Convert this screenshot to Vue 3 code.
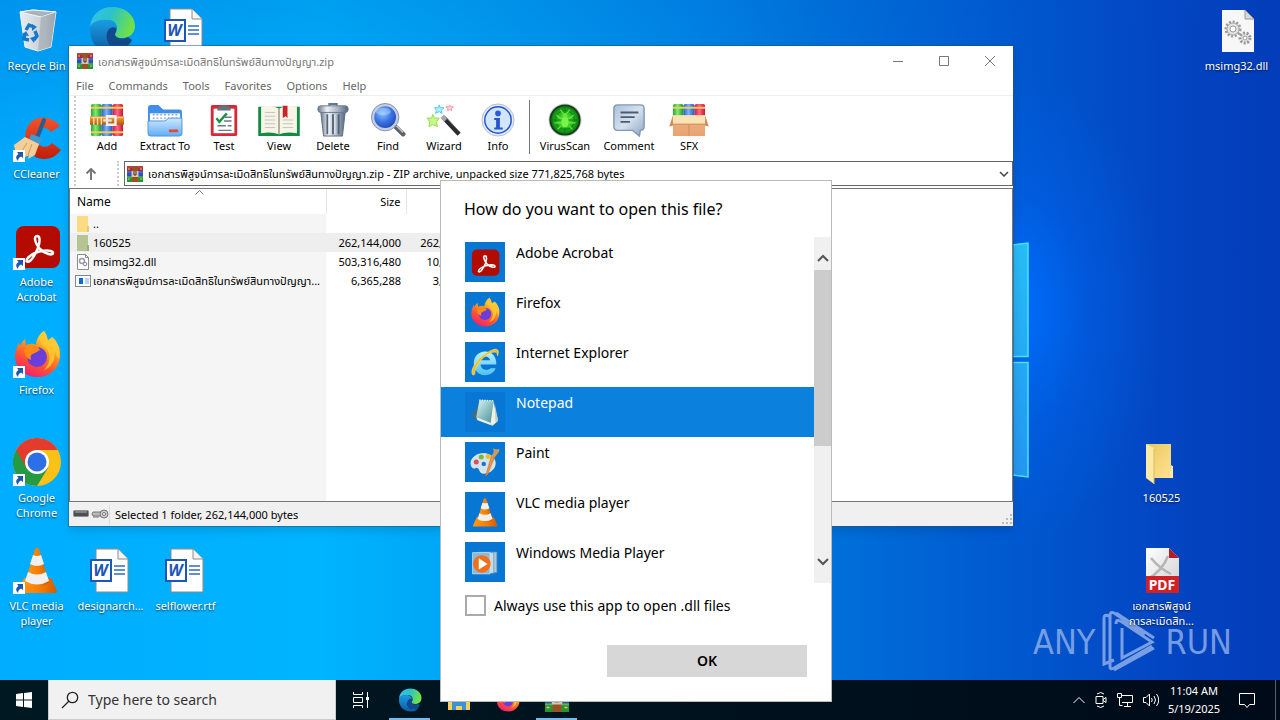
<script setup>
import { ref } from 'vue'

const archiveName = 'เอกสารพิสูจน์การละเมิดสิทธิในทรัพย์สินทางปัญญา'

const menus = ['File', 'Commands', 'Tools', 'Favorites', 'Options', 'Help']

const tools = [
  { label: 'Add', icon: 'i-add' },
  { label: 'Extract To', icon: 'i-extract' },
  { label: 'Test', icon: 'i-test' },
  { label: 'View', icon: 'i-view' },
  { label: 'Delete', icon: 'i-delete' },
  { label: 'Find', icon: 'i-find' },
  { label: 'Wizard', icon: 'i-wizard' },
  { label: 'Info', icon: 'i-info' },
  { sep: true },
  { label: 'VirusScan', icon: 'i-virus' },
  { label: 'Comment', icon: 'i-comment' },
  { label: 'SFX', icon: 'i-sfx' },
]

const files = [
  { name: '..', size: '', packed: '', icon: 'i-folder-s' },
  { name: '160525', size: '262,144,000', packed: '262,', icon: 'i-folder-g', selected: true },
  { name: 'msimg32.dll', size: '503,316,480', packed: '10,', icon: 'i-dll-s' },
  { name: archiveName + '...', size: '6,365,288', packed: '3,', icon: 'i-exe-s' },
]

const shortcuts = [
  { label: 'Recycle Bin', icon: 'i-bin', x: 0, y: 6 },
  { label: '', icon: 'i-edge', x: 75, y: 6 },
  { label: '', icon: 'i-word', x: 148, y: 6, badge: 'W' },
  { label: 'CCleaner', icon: 'i-ccleaner', x: 0, y: 114, link: true },
  { label: 'Adobe Acrobat', icon: 'i-acrobat', x: 0, y: 222, link: true },
  { label: 'Firefox', icon: 'i-firefox', x: 0, y: 330, link: true },
  { label: 'Google Chrome', icon: 'i-chrome', x: 0, y: 438, link: true },
  { label: 'VLC media player', icon: 'i-vlc', x: 0, y: 546, link: true },
  { label: 'designarch...', icon: 'i-word', x: 74, y: 546, badge: 'W' },
  { label: 'selflower.rtf', icon: 'i-word', x: 149, y: 546, badge: 'W' },
  { label: 'msimg32.dll', icon: 'i-dll', x: 1200, y: 6 },
  { label: '160525', icon: 'i-folder', x: 1125, y: 438 },
  { label: 'เอกสารพิสูจน์ การละเมิดสิท...', icon: 'i-pdf', x: 1125, y: 546, badge: 'PDF' },
]

const apps = [
  { name: 'Adobe Acrobat', icon: 'i-acrobat' },
  { name: 'Firefox', icon: 'i-firefox' },
  { name: 'Internet Explorer', icon: 'i-ie' },
  { name: 'Notepad', icon: 'i-notepad' },
  { name: 'Paint', icon: 'i-paint' },
  { name: 'VLC media player', icon: 'i-vlc' },
  { name: 'Windows Media Player', icon: 'i-wmp' },
]
const chosen = ref('Notepad')
const always = ref(false)
</script>

<template>
  <div class="desktop">
    <svg class="defs" width="0" height="0" aria-hidden="true">
      <defs>
        <linearGradient id="g-edge1" x1="0" y1="0" x2="1" y2="0.3"><stop offset="0" stop-color="#35c1f1" /><stop offset="0.5" stop-color="#2bc3c8" /><stop offset="1" stop-color="#6fe04a" /></linearGradient>
        <linearGradient id="g-edge2" x1="0" y1="0" x2="0" y2="1"><stop offset="0" stop-color="#1b9de2" /><stop offset="1" stop-color="#0c59a4" /></linearGradient>
        <linearGradient id="g-ff" x1="0.8" y1="0" x2="0.3" y2="1"><stop offset="0" stop-color="#fff04a" /><stop offset="0.35" stop-color="#ffa51e" /><stop offset="0.7" stop-color="#ff5035" /><stop offset="1" stop-color="#ee1f76" /></linearGradient>
        <linearGradient id="g-bin" x1="0" y1="0" x2="1" y2="0"><stop offset="0" stop-color="#e8edf0" /><stop offset="0.7" stop-color="#c4ccd3" /><stop offset="1" stop-color="#9ba6b0" /></linearGradient>
        <linearGradient id="g-cone" x1="0" y1="0" x2="1" y2="0"><stop offset="0" stop-color="#ff9a1c" /><stop offset="0.6" stop-color="#f47b00" /><stop offset="1" stop-color="#cf5b00" /></linearGradient>
        <linearGradient id="g-cc" x1="0" y1="0" x2="0" y2="1"><stop offset="0" stop-color="#f2522c" /><stop offset="1" stop-color="#c11d0b" /></linearGradient>
        <linearGradient id="g-fold" x1="0" y1="0" x2="1" y2="1"><stop offset="0" stop-color="#e9c85f" /><stop offset="1" stop-color="#ffe394" /></linearGradient>
        <linearGradient id="g-green" x1="0" y1="0" x2="1" y2="0"><stop offset="0" stop-color="#2aa33a" /><stop offset="0.45" stop-color="#7cec72" /><stop offset="1" stop-color="#1b9330" /></linearGradient>
        <linearGradient id="g-blue" x1="0" y1="0" x2="1" y2="0"><stop offset="0" stop-color="#2a5ec8" /><stop offset="0.45" stop-color="#7ab2fa" /><stop offset="1" stop-color="#2455b8" /></linearGradient>
        <linearGradient id="g-red" x1="0" y1="0" x2="1" y2="0"><stop offset="0" stop-color="#d01c42" /><stop offset="0.45" stop-color="#ff6684" /><stop offset="1" stop-color="#c0183c" /></linearGradient>
        <linearGradient id="g-belt" x1="0" y1="0" x2="0" y2="1"><stop offset="0" stop-color="#f6a443" /><stop offset="1" stop-color="#b3580c" /></linearGradient>
        <linearGradient id="g-xfold" x1="0" y1="0" x2="0" y2="1"><stop offset="0" stop-color="#cfe8ff" /><stop offset="1" stop-color="#62adf5" /></linearGradient>
        <linearGradient id="g-metal" x1="0" y1="0" x2="1" y2="0"><stop offset="0" stop-color="#69778a" /><stop offset="0.3" stop-color="#eef2f6" /><stop offset="0.65" stop-color="#a9b6c5" /><stop offset="1" stop-color="#56647a" /></linearGradient>
        <radialGradient id="g-lens" cx="0.4" cy="0.35" r="0.7"><stop offset="0" stop-color="#8cc2ff" /><stop offset="0.5" stop-color="#3a74e4" /><stop offset="1" stop-color="#1b3fae" /></radialGradient>
        <radialGradient id="g-virus"><stop offset="0" stop-color="#71ef3c" /><stop offset="0.6" stop-color="#24b41c" /><stop offset="1" stop-color="#0a7312" /></radialGradient>
        <linearGradient id="g-bubble" x1="0" y1="0" x2="1" y2="1"><stop offset="0" stop-color="#a9c0dc" /><stop offset="0.5" stop-color="#d5e1ee" /><stop offset="1" stop-color="#8ba5c4" /></linearGradient>
        <linearGradient id="g-box" x1="0" y1="0" x2="0" y2="1"><stop offset="0" stop-color="#f0b27f" /><stop offset="1" stop-color="#e8a373" /></linearGradient>
        <linearGradient id="g-ie" x1="0" y1="0" x2="0" y2="1"><stop offset="0" stop-color="#b8f0ff" /><stop offset="1" stop-color="#4fc2f5" /></linearGradient>
        <linearGradient id="g-note" x1="0" y1="0" x2="1" y2="1"><stop offset="0" stop-color="#e3f3f1" /><stop offset="0.5" stop-color="#8fc3c5" /><stop offset="1" stop-color="#4c8f9b" /></linearGradient>
        <linearGradient id="g-page" x1="0" y1="0" x2="1" y2="1"><stop offset="0" stop-color="#ffffff" /><stop offset="1" stop-color="#cfcfcf" /></linearGradient>
        <linearGradient id="g-pane" x1="0" y1="0" x2="0" y2="1"><stop offset="0" stop-color="#27bdf6" /><stop offset="1" stop-color="#2496f3" /></linearGradient>
      </defs>

      <symbol id="i-bin" viewBox="0 0 48 48">
        <path d="M7 6 20 4 43 6 38 41 25 45 12 41Z" fill="url(#g-bin)" stroke="#eef6fa" />
        <path d="M7 6 20 4 43 6 28 11Z" fill="#a9b3ba" stroke="#f5f8fa" />
        <path d="M28 11 43 6 38 41 25 45Z" fill="#9aa4ac" opacity=".55" />
        <g fill="none" stroke="#1778c9" stroke-width="3.4"><path d="m13 24 3-5 5 2m1 4 2 5-3 4m-5 0-5-1 1-6" /></g>
        <path d="m19 18 5 3-5 4ZM23 30l-6 2 4 5ZM9 29l4-4 3 5Z" fill="#1778c9" />
      </symbol>
      <symbol id="i-edge" viewBox="0 0 48 48">
        <path d="M2 21C3 8 13 1 24 1c15 0 23 10 23 19 0 8-6 12-13 12-5 0-8-2-7-4 5-6 1-14-7-14C11 14 4 17 2 21Z" fill="url(#g-edge1)" />
        <path d="M2 21c2-5 9-8 17-7 6 1 10 5 9 11-3-2-10 1-9 9 1 6 7 9 13 8 5 0 9-2 11-4-4 6-11 10-19 9C9 46 1 35 2 21Z" fill="url(#g-edge2)" />
        <path d="M19 34c-2-8 3-15 9-12 1 3-1 5-1 7 1 3 7 5 13 2l4 3c-1 3-5 8-12 8-6 1-12-2-13-8Z" fill="#114a8b" />
      </symbol>
      <symbol id="i-word" viewBox="0 0 48 48">
        <path d="M9 3H31L41 13V46H9Z" fill="#fff" stroke="#8a8a8a" />
        <path d="M31 3V13H41" fill="#f4f4f4" stroke="#8a8a8a" />
        <path d="M27 20h11M27 24h11M27 28h11" stroke="#2b6cc4" stroke-width="1.3" />
        <rect x="4" y="14" width="20" height="21" fill="#fff" stroke="#1c57b8" stroke-width="2" />
      </symbol>
      <symbol id="i-ccleaner" viewBox="0 0 48 48">
        <path d="M47 12C38 1 20 0 14 14c-6 15 3 31 17 31 8 0 13-4 17-9l-9-7c-6 7-15 4-15-6 0-9 8-13 14-5Z" fill="url(#g-cc)" />
        <path d="M31 6 24 24" stroke="#235f92" stroke-width="4" stroke-linecap="round" />
        <path d="m18 20 11 4-3 8-11-3Z" fill="#4598cf" />
        <path d="m12 23 14 7-4 11-7 4 1-4-6 3 1-4-8 1-2-10Z" fill="#f3cf96" /><path d="m14 29-5 8m10-7-4 11" stroke="#c99b5c" />
      </symbol>
      <symbol id="i-acrobat" viewBox="0 0 48 48">
        <rect x="3" y="4" width="44" height="42" rx="8" fill="#b30b00" />
        <path d="M24 14c-3 0-3 6 3 13 5 5 13 7 13 4 0-4-16-3-23 3-6 5-3 8 1 4 6-7 10-18 8-23q-1-1-2-1Z" fill="none" stroke="#fff" stroke-width="2.5" />
      </symbol>
      <symbol id="i-firefox" viewBox="0 0 48 48">
        <path d="M31 1c3 4 3 7 4 9 4 1 4-3 4-3 6 5 9 12 8 20-1 12-11 20-22 20C12 47 2 39 2 26c0-6 3-10 4-14l1 4c1-3 3-5 5-7l1 6c4-1 7-2 10 0 0-5 3-11 8-14Z" fill="url(#g-ff)" />
        <circle cx="24" cy="27" r="10" fill="#6b3ddb" />
        <path d="M14 16c5-3 11 0 13 4l-5 3c-4 1-5 3-4 7-6-2-9-8-4-14Z" fill="#ff8a16" />
        <path d="M31 1c3 4 3 7 4 9l4-3c6 5 9 14 7 22-2-2-3-4-4-8 0 10-4 17-11 19 6-6 8-16 2-22-7-5-8-11-2-17Z" fill="#ffc832" opacity=".85" />
      </symbol>
      <symbol id="i-chrome" viewBox="0 0 48 48">
        <circle cx="24" cy="24" r="24" fill="#fbc116" />
        <path d="M24 24 3.2 12A24 24 0 0 1 44.8 12Z" fill="#e33b2e" />
        <path d="M24 24 3.2 12A24 24 0 0 0 24 48L35 30Z" fill="#259a43" />
        <path d="M24 12H44.8L34 30Z" fill="#fbc116" /><path d="M3.2 12 13.6 30 24 12Z" fill="#e33b2e" />
        <circle cx="24" cy="24" r="12" fill="#fff" /><circle cx="24" cy="24" r="9.5" fill="#2d6fe6" />
      </symbol>
      <symbol id="i-vlc" viewBox="0 0 48 48">
        <path d="M11 32H38L44 45Q44 47 42 47H6Q4 47 5 45Z" fill="url(#g-cone)" />
        <path d="M22 3Q24 1 26 3L36 37Q24 45 12 37Z" fill="url(#g-cone)" />
        <path d="m20 9-3 9q7 4 14 0l-3-9q-4 2-8 0ZM15 26l-3 9q12 7 24 0l-3-9q-9 5-18 0Z" fill="#f0f0ee" />
      </symbol>
      <symbol id="i-dll" viewBox="0 0 48 48">
        <path d="M9 4H32L41 13V46H9Z" fill="#f7f7f7" /><path d="M32 4V13H41Z" fill="#d8d8d8" stroke="#999" />
        <circle cx="20" cy="23" r="7" fill="#e6e6e6" stroke="#9b9b9b" stroke-width="3" stroke-dasharray="2 1.6" />
        <circle cx="20" cy="23" r="6" fill="#e3e3e3" stroke="#aaa" /><circle cx="20" cy="23" r="3" fill="#fff" stroke="#999" />
        <circle cx="32" cy="32" r="5" fill="#e6e6e6" stroke="#999" stroke-width="3" stroke-dasharray="2 1.5" />
        <circle cx="32" cy="32" r="2" fill="#fff" stroke="#999" />
      </symbol>
      <symbol id="i-dll-s" viewBox="0 0 16 16">
        <path d="M2.500 .5h8l3 3v12h-11Z" fill="#fff" stroke="#8b8b8b" /><path d="M10.500 .5v3h3" fill="none" stroke="#8b8b8b" />
        <circle cx="7" cy="7" r="2.500" fill="none" stroke="#99a" stroke-width="1.500" /><circle cx="10" cy="10" r="1.800" fill="#eef" stroke="#889" />
      </symbol>
      <symbol id="i-exe-s" viewBox="0 0 16 16">
        <rect x=".5" y="2.500" width="15" height="11" fill="#fff" stroke="#7f8790" />
        <path d="M4 5h4v6H4Z" fill="#0a6dd6" /><path d="M10 6h4M10 8h4M10 10h4" stroke="#74a9e6" />
      </symbol>
      <symbol id="i-folder" viewBox="0 0 48 48">
        <path d="M8 6H33V28L35 28V40H16Z" fill="url(#g-fold)" />
        <path d="M33 27q2 1 2 3V40h-3Z" fill="#ffe9a6" />
        <path d="m8 6 8 4V46L8 40Z" fill="#ffeaa5" /><path d="M16 11V46" stroke="#e0bd55" />
      </symbol>
      <symbol id="i-folder-s" viewBox="0 0 16 16"><path d="M2 0h11v10h1v6H2Z" fill="#fbdc84" /><path d="M12 10h2v6h-2Z" fill="#e9c96c" /></symbol>
      <symbol id="i-folder-g" viewBox="0 0 16 16"><path d="M2 0h11v10h1v6H2Z" fill="#b5c493" /><path d="M12 10h2v6h-2Z" fill="#9cad78" /></symbol>
      <symbol id="i-pdf" viewBox="0 0 48 48">
        <path d="M8 2H31L41 12V47H8Z" fill="url(#g-page)" />
        <path d="M13 12q8 10 20 16M30 10q-5 14-21 24" fill="none" stroke="#b5b5b5" stroke-width="2.500" />
        <path d="M31 2V12H41Z" fill="#b81c22" /><rect x="8" y="30" width="33" height="17" fill="#d22027" />
      </symbol>
      <symbol id="i-link" viewBox="0 0 12 12">
        <path d="M0 0h12v12H0Z" fill="#fff" /><path d="M4 2h6v6L8 6.500Q5 8 5 11 1 7 5.500 4Z" fill="#1d58ab" />
      </symbol>

      <symbol id="i-rar" viewBox="0 0 16 16">
        <path d="M0 0h16v5H0Z" fill="#a92a3c" /><path d="M0 5h16v5H0Z" fill="#2c50bd" /><path d="M0 10h16v6H0Z" fill="#24943b" />
        <path d="M0 1h16M0 6h16M0 11h16" stroke="#fff" stroke-opacity=".25" />
        <path d="M5 0h6v16H5Z" fill="#9a5320" /><path d="M4.500 5h7v6h-7Z" fill="#d6c5b4" /><path d="M7 5v4h2V5" fill="none" stroke="#4d2d21" />
        <path d="M1 3h2M13 3h2M1 13h2M13 13h2" stroke="#eecb3e" />
      </symbol>
      <symbol id="i-add" viewBox="0 0 36 36">
        <rect x="1" y="1" width="11" height="34" rx="2" fill="url(#g-green)" /><rect x="12" y="1" width="12" height="34" rx="2" fill="url(#g-blue)" /><rect x="24" y="1" width="11" height="34" rx="2" fill="url(#g-red)" />
        <path d="M1 5h34M1 31h34" stroke="#f3cd43" stroke-width="2" />
        <path d="M0 14h36v9H0Z" fill="url(#g-belt)" /><path d="M1 15.500h34" stroke="#ffd492" />
        <path d="M4 15v8M8 15v8M12 15v8" stroke="#f7dfa5" stroke-width="1.500" />
        <path d="M18 14h9v9h-9Z" fill="none" stroke="#f1f1f1" stroke-width="2.500" /><path d="M14 18.500h9" stroke="#e4e4e4" stroke-width="2.500" />
      </symbol>
      <symbol id="i-extract" viewBox="0 0 36 36">
        <path d="M0 5Q0 2 3 2h8l5 5h17q3 0 3 3v22H0Z" fill="#3f8fea" /><path d="M2 11h32v10H2Z" fill="#fff" />
        <path d="M5 12.500h27M5 16h27" stroke="#89a8c9" stroke-dasharray="2 2" stroke-width="1.500" />
        <path d="M0 19h18l4-3h14v16q0 3-3 3H3q-3 0-3-3Z" fill="url(#g-xfold)" stroke="#4c94dc" /><rect x="22" y="28" width="10" height="3" rx="1" fill="#e44932" />
      </symbol>
      <symbol id="i-test" viewBox="0 0 36 36">
        <rect x="4" y="2" width="28" height="33" rx="2" fill="#d72837" /><path d="M7 6h22v26H7Z" fill="#fff" />
        <path d="M11 5q7-5 14 0v3H11Z" fill="#697078" /><path d="m10 16 3 4 8-9" fill="none" stroke="#169340" stroke-width="2.500" />
        <path d="M19 15h7M18 19h8M11 24h9m2 0h4m-14 5h14" stroke="#6c7b82" stroke-width="1.500" />
      </symbol>
      <symbol id="i-view" viewBox="0 0 44 36">
        <path d="M0 4h44v31H0Z" fill="#128b43" /><path d="M3 4q11-3 19 2 8-5 19-2v28q-11-2-19 1-8-3-19-1Z" fill="#f7f4e8" />
        <path d="M22 6v27" stroke="#b0aa98" stroke-width="2" /><path d="M7 10h11M7 14h11M7 18h11M7 22h11M7 26h11M26 18h11M26 22h11M26 26h11" stroke="#c3c1b8" />
        <path d="M26 3h5v13l-2-2-3 2Z" fill="#c4262c" />
      </symbol>
      <symbol id="i-delete" viewBox="0 0 36 36">
        <path d="M5 9h26l-3 26H8Z" fill="url(#g-metal)" stroke="#5c6c7f" /><path d="M12 12v21M18 12v21M24 12v21" stroke="#54657a" stroke-width="2" /><path d="M14 12v21M20 12v21" stroke="#f2f5f7" />
        <rect x="2" y="3" width="32" height="7" rx="3" fill="url(#g-metal)" stroke="#66768a" /><path d="M14 3V1h8v2" fill="none" stroke="#66768a" stroke-width="2" />
      </symbol>
      <symbol id="i-find" viewBox="0 0 36 36">
        <path d="m26 25 8 8" stroke="#5e636a" stroke-width="5" stroke-linecap="round" /><path d="m27 24 7 7" stroke="#b9bdc2" stroke-width="2" />
        <circle cx="15" cy="15" r="13" fill="url(#g-lens)" stroke="#c4cede" stroke-width="3" /><circle cx="15" cy="15" r="14.500" fill="none" stroke="#8191aa" /><ellipse cx="13" cy="9" rx="8" ry="4" fill="#b9dcff" opacity=".45" />
      </symbol>
      <symbol id="i-wizard" viewBox="0 0 36 36">
        <path d="m17 15 17 18" stroke="#2b2b2d" stroke-width="4.500" /><path d="m16 14 4 4" stroke="#a9a9ad" stroke-width="5" /><path d="m20 15 14 15" stroke="#777" />
        <path d="m6 12 2 4 5 0-3 4 1 5-5-2-4 2 1-5-3-4 5 0Z" fill="#c6f98a" stroke="#8fdc4b" />
        <path d="m13 2 1 3 4 0-3 3 1 3-3-2-4 2 1-3-2-3 4 0Z" fill="#b2f2ff" stroke="#4fc3ec" /><path d="m24 2 1 2h3l-2 2v2l-2-1-2 1v-2l-2-2h3Z" fill="#ffd9df" stroke="#f48fa3" />
      </symbol>
      <symbol id="i-info" viewBox="0 0 36 36">
        <circle cx="18" cy="18" r="17" fill="#e6ebf3" stroke="#b1bccb" /><circle cx="18" cy="18" r="14" fill="#d2e5fb" stroke="#2054cf" stroke-width="1.500" />
        <circle cx="18" cy="11" r="3" fill="#2a5bd8" /><path d="M14 16h6v10h3v2h-9v-2h2v-8h-2Z" fill="#2454d0" />
      </symbol>
      <symbol id="i-virus" viewBox="0 0 36 36">
        <circle cx="18" cy="18" r="17.500" fill="#c6d2c6" /><circle cx="18" cy="18" r="15.500" fill="url(#g-virus)" stroke="#193b1c" stroke-width="2" />
        <g stroke="#087c12" stroke-width="1" fill="none"><circle cx="18" cy="18" r="10" /><path d="M3 18h30M18 3v30" /></g>
        <ellipse cx="18" cy="20" rx="4" ry="6" fill="#77f34a" /><circle cx="18" cy="13" r="2.500" fill="#69e63e" /><path d="m14 17-5-4m5 8H7m7 3-4 4m12-11 5-4m-5 8h7m-7 3 4 4M16 11l-3-4m7 4 3-4" stroke="#6ce640" stroke-width="1.200" />
      </symbol>
      <symbol id="i-comment" viewBox="0 0 36 36">
        <path d="M6 2h24q4 0 4 4v19q0 4-4 4l-1 6-7-6H6q-4 0-4-4V6q0-4 4-4Z" fill="url(#g-bubble)" stroke="#8397b0" stroke-width="1.500" />
        <path d="M9 10h19M9 15h15M9 20h10" stroke="#4c5c70" stroke-width="2" />
      </symbol>
      <symbol id="i-sfx" viewBox="0 0 42 36">
        <rect x="4" y="1" width="11" height="14" rx="2" fill="url(#g-green)" /><rect x="15" y="1" width="12" height="14" rx="2" fill="url(#g-blue)" /><rect x="27" y="1" width="11" height="14" rx="2" fill="url(#g-red)" /><path d="M4 5h34" stroke="#edce55" stroke-width="2" />
        <path d="M4 13h34v22H4Z" fill="url(#g-box)" /><path d="M4 13h34l1 9H3Z" fill="#fbe3b3" /><path d="m4 13-4 12 4-1ZM38 13l4 12-4-1Z" fill="#cf8e59" /><path d="M4 22.500h34M21 23v12" stroke="#c98d60" />
      </symbol>

      <symbol id="i-ie" viewBox="0 0 48 48">
        <path d="M41 34c-3 8-10 11-17 11C13 45 6 37 6 26 6 15 14 7 24 7c11 0 19 8 18 21H17c0 9 12 11 16 6Z" fill="url(#g-ie)" />
        <path d="M17 21h15c-1-8-14-8-15 0Z" fill="#0874cf" />
        <path d="M5 45C-3 39 14 12 38 4c7-2 9 2 6 10 0-7-5-7-12-4C17 17 6 35 8 43Z" fill="#f0bd26" stroke="#ffe67c" />
      </symbol>
      <symbol id="i-notepad" viewBox="0 0 48 48">
        <path d="m14 12 4-7-4 30-13-4Z" fill="#3f6f7c" /><path d="m37 6 8 32-9 8-4-6Z" fill="#f1f0e5" /><path d="m39 8 6 30-4 3Z" fill="#c9cbbf" />
        <path d="m15 5 23 1-5 35-23-9Z" fill="url(#g-note)" /><path d="m10 32 23 9 3 5-24-9Z" fill="#eeeeea" /><path d="m15 5 23 1" stroke="#fff" stroke-width="2" stroke-dasharray="2 2" />
      </symbol>
      <symbol id="i-paint" viewBox="0 0 48 48">
        <path d="M3 32c-7-14 12-27 29-19 15 8 9 29-10 29-8 0-5-7-10-9-3-1-5 3-9-1Z" fill="#d4e3ef" stroke="#fff" />
        <circle cx="10" cy="24" r="4" fill="#d75255" /><circle cx="18" cy="16" r="4" fill="#7cb737" /><circle cx="29" cy="15" r="4" fill="#edbd31" /><circle cx="22" cy="27" r="3.500" fill="#1474ca" />
        <path d="m25 46 9-31 5 2-11 27Z" fill="#ee923f" stroke="#c9762f" /><path d="m34 15 4-7-1-6 5 2 5-1-1 5-7 9Z" fill="#cf9b5c" />
      </symbol>
      <symbol id="i-wmp" viewBox="0 0 48 48">
        <path d="M14 8h29v33H14Z" fill="#a9c9df" stroke="#5f8eae" /><path d="M9 9h29v33H9Z" fill="#c5dbea" stroke="#5c8ead" /><path d="M4 9h28v34H4Z" fill="#8fb8d3" stroke="#dcebf5" />
        <circle cx="19" cy="27" r="14" fill="#f06f19" /><path d="m14 18 14 9-14 9Z" fill="#fff" />
      </symbol>
      <symbol id="i-explorer" viewBox="0 0 24 24"><path d="M1 3h8l2 3h12v16H1Z" fill="#f6cf5e" /><path d="M5 11h14v11h-4v-4H9v4H5Z" fill="#3b91d6" /></symbol>
    </svg>

    <svg class="panes" viewBox="0 0 18 240" aria-hidden="true">
      <path d="M0 3 15 1V114.500H0M0 120.500H15V235L0 233" fill="url(#g-pane)" stroke="#48e4ff" stroke-width="1.500" />
    </svg>

    <div class="watermark" aria-label="ANY RUN">
      <span>ANY</span>
      <svg width="56" height="64" viewBox="0 0 56 64"><path d="M43 24 12 3Q8 1 8 6V42M20 18V48L50 32 20 12Q14 8 14 14M8 42V57Q8 60 12 58L50 36M2 8V54L12 50M12 60 52 38M14 3 52 28M2 8Q2 4 7 6" /></svg>
      <span>RUN</span>
    </div>

    <a v-for="s in shortcuts" :key="s.x + '-' + s.y" class="shortcut" href="#" :style="{ left: (s.x / 12.8) + '%', top: s.y + 'px' }">
      <span class="shortcut-pic">
        <svg width="48" height="48"><use :href="'#' + s.icon" /></svg>
        <svg v-if="s.link" class="arrow" width="12" height="12"><use href="#i-link" /></svg>
        <span v-if="s.badge" :class="['badge', s.badge === 'W' ? 'badge-word' : 'badge-pdf']">{{ s.badge }}</span>
      </span>
      <span class="shortcut-label">{{ s.label }}</span>
    </a>

    <section class="window" aria-label="WinRAR">
      <header class="titlebar">
        <svg width="16" height="16"><use href="#i-rar" /></svg>
        <span class="title">{{ archiveName }}.zip</span>
        <div class="winbtns">
          <button aria-label="Minimize"><svg width="12" height="12" viewBox="0 0 12 12"><path d="M1 6.500h10" /></svg></button>
          <button aria-label="Maximize"><svg width="12" height="12" viewBox="0 0 12 12"><path d="M1.500 1.500h9v9h-9Z" /></svg></button>
          <button aria-label="Close"><svg width="12" height="12" viewBox="0 0 12 12"><path d="m1 1 10 10M11 1 1 11" /></svg></button>
        </div>
      </header>
      <nav class="menubar"><button v-for="m in menus" :key="m">{{ m }}</button></nav>
      <div class="toolbar">
        <template v-for="(t, i) in tools" :key="i">
          <span v-if="t.sep" class="tool-sep"></span>
          <button v-else class="tool"><svg width="42" height="34"><use :href="'#' + t.icon" /></svg>{{ t.label }}</button>
        </template>
      </div>
      <div class="address">
        <button class="up" aria-label="Up one level"><svg width="12" height="12" viewBox="0 0 12 12"><path d="M6 12V1M1.500 5.500 6 1l4.500 4.500" /></svg></button>
        <div class="combo">
          <svg width="16" height="16"><use href="#i-rar" /></svg>
          <span class="path">{{ archiveName }}.zip - ZIP archive, unpacked size 771,825,768 bytes</span>
          <svg class="down" width="10" height="6" viewBox="0 0 10 6"><path d="m1 1 4 4 4-4" /></svg>
        </div>
      </div>
      <div class="files">
        <svg class="sort" width="9" height="5" viewBox="0 0 9 5"><path d="m.5 4.500 4-4 4 4" /></svg>
        <table>
          <thead><tr><th class="name">Name</th><th class="num">Size</th><th class="packed"></th><th></th></tr></thead>
          <tbody>
            <tr v-for="f in files" :key="f.name" :class="{ selected: f.selected }">
              <td class="name"><span class="file"><svg width="16" height="16"><use :href="'#' + f.icon" /></svg>{{ f.name }}</span></td>
              <td class="num">{{ f.size }}</td><td class="packed">{{ f.packed }}</td><td class="rest"></td>
            </tr>
          </tbody>
        </table>
        <div class="name-fill"></div>
      </div>
      <footer class="status">
        <svg class="status-icons" width="36" height="12" viewBox="0 0 36 12">
          <rect x=".5" y="2.500" width="15" height="6" rx="1" fill="#4b5055" stroke="#8c9095" /><path d="M2 4h12" stroke="#aeb3b7" />
          <path d="M20 4h8v4h-8l-1-2ZM20 9h6" fill="#bbb" stroke="#777" /><circle cx="31" cy="6" r="4" fill="#ccc" stroke="#777" /><circle cx="31" cy="6" r="1.500" fill="#fff" stroke="#777" />
        </svg>
        <span class="status-text">Selected 1 folder, 262,144,000 bytes</span>
        <svg class="grip" width="10" height="10" viewBox="0 0 10 10"><path d="M8 0h2v2H8ZM4 4h2v2H4ZM8 4h2v2H8ZM0 8h2v2H0ZM4 8h2v2H4ZM8 8h2v2H8Z" /></svg>
      </footer>
    </section>

    <footer class="taskbar">
      <button class="start" aria-label="Start"><svg width="16" height="16" viewBox="0 0 16 16"><path d="m0 2 7-1v6.500H0ZM8 1l8-1v7.500H8ZM0 8.500h7V15l-7-1ZM8 8.500h8V16l-8-1Z" fill="#fff" /></svg></button>
      <label class="search">
        <svg width="18" height="18" viewBox="0 0 18 18"><circle cx="11.500" cy="6.500" r="5.200" /><path d="m8 10-7 7" /></svg>
        <input type="text" placeholder="Type here to search" aria-label="Type here to search" />
      </label>
      <button class="task" aria-label="Task view"><svg width="18" height="16" viewBox="0 0 18 16" fill="none" stroke="#fff"><path d="M1.500 0v2.500h9V0M1.500 5.500h9v5h-9ZM1.500 16v-2.500h9V16M15.500 0v16" /><path d="M14 5h3v3h-3Z" fill="#fff" stroke="none" /></svg></button>
      <button class="task open" aria-label="Microsoft Edge"><svg width="24" height="24"><use href="#i-edge" /></svg></button>
      <button class="task" aria-label="File Explorer"><svg width="24" height="24"><use href="#i-explorer" /></svg></button>
      <button class="task" aria-label="Firefox"><svg width="24" height="24"><use href="#i-firefox" /></svg></button>
      <button class="task open" aria-label="WinRAR"><svg width="24" height="24"><use href="#i-rar" /></svg></button>
      <div class="tray">
        <svg width="12" height="8" viewBox="0 0 12 8"><path d="m.5 7 5.500-5.500L11.500 7" /></svg>
        <svg width="12" height="16" viewBox="0 0 12 16"><path d="M1 4.500h7v7H1ZM8 7.500l3-2v5l-3-2M2 2q4-3 7 0M2 14q4 3 7 0" /></svg>
        <svg width="16" height="14" viewBox="0 0 16 14"><path d="M5 2.500h10.500v7H5M.5.500h4v4h-4ZM2.500 4.500v8h3M10.500 9.500v4M7 13.500h7" /></svg>
        <svg width="16" height="14" viewBox="0 0 16 14"><path d="M.5 4.500h2.500l3.500-3.500v12L3 9.500H.5ZM8.500 5q1.500 2 0 4M11 3q3 4 0 8M13.500 1q4.500 6 0 12" /></svg>
      </div>
      <div class="clock"><span>11:04 AM</span><span>5/19/2025</span></div>
      <button class="notify" aria-label="Notifications"><svg width="16" height="17" viewBox="0 0 16 17"><path d="M.5 1.500h15v11h-5L8 15.500 5.500 12.500h-5Z" /></svg></button>
      <span class="peek"></span>
    </footer>

    <section class="dialog" role="dialog" aria-labelledby="open-title">
      <h1 id="open-title">How do you want to open this file?</h1>
      <div class="picker">
        <ul>
          <li v-for="a in apps" :key="a.name">
            <button :class="['app', { chosen: chosen === a.name }]" @click="chosen = a.name">
              <span class="tile"><svg width="30" height="30"><use :href="'#' + a.icon" /></svg></span>
              <span class="app-name">{{ a.name }}</span>
            </button>
          </li>
        </ul>
        <div class="scroll">
          <svg width="12" height="8" viewBox="0 0 12 8"><path d="m1 7 5-5 5 5" /></svg>
          <div class="thumb"></div>
          <svg class="scroll-down" width="12" height="8" viewBox="0 0 12 8"><path d="m1 1 5 5 5-5" /></svg>
        </div>
      </div>
      <label class="always"><input v-model="always" type="checkbox" />Always use this app to open .dll files</label>
      <button class="ok">OK</button>
    </section>
  </div>
</template>

<style>
body { background: #0078d7; }
</style>

<style scoped>
* { box-sizing: border-box; }
button { border: 0; padding: 0; margin: 0; background: none; font: inherit; color: inherit; }
svg { display: block; flex: none; }
.defs { position: absolute; }
.desktop {
  position: relative; min-height: 100vh; overflow: hidden; display: flex; flex-direction: column; justify-content: flex-end;
  font: 11px/15px "Noto Sans", "Noto Sans Thai", "Open Sans", sans-serif; color: #000;
  background:
    radial-gradient(ellipse 150px 240px at 1015px 310px, rgba(0, 110, 255, .95), rgba(0, 100, 240, .4) 50%, transparent 100%),
    linear-gradient(172deg, rgba(0, 80, 190, .28), transparent 22%),
    linear-gradient(90deg, #00adff 0, #00b4ff 25%, #00a2f4 38%, #0086e6 54%, #006ed9 66%, #0057ce 80%, #0345c2 91%, #033cb9 100%);
}
.panes { position: absolute; left: 1013px; top: 242px; width: 18px; height: 240px; }
.shortcut { position: absolute; width: 73px; display: flex; flex-direction: column; align-items: center; gap: 4px; color: #fff; text-decoration: none; text-align: center; }
.shortcut-pic { position: relative; }
.arrow { position: absolute; left: 0; bottom: 0; }
.badge { position: absolute; text-align: center; font-weight: 700; }
.badge-word { left: 4px; top: 14px; width: 20px; font-size: 16px; line-height: 21px; font-style: italic; color: #1c57b8; }
.badge-pdf { left: 8px; top: 30px; width: 33px; font-size: 14px; line-height: 17px; }
.shortcut-label { max-width: 73px; text-shadow: 0 1px 2px rgba(0, 0, 0, .7); }

.window { position: absolute; left: 69px; top: 46px; width: 944px; height: 480px; display: flex; flex-direction: column; background: #fff; box-shadow: 0 0 0 1px rgba(40, 80, 120, .5), 0 4px 10px rgba(0, 0, 0, .15); }
.titlebar { display: flex; align-items: center; height: 30px; padding-left: 8px; gap: 5px; color: #777; }
.title { flex: 1; white-space: nowrap; }
.winbtns { display: flex; }
.winbtns button { width: 46px; height: 28px; display: grid; place-items: center; }
.winbtns path { fill: none; stroke: #777; }
.menubar { display: flex; height: 20px; padding-left: 7px; gap: 15px; color: #666; border-bottom: 1px solid #eee; }
.toolbar { display: grid; grid-template-columns: 54px 62px 56px 54px 54px 56px 56px 52px 12px 58px 70px 50px; height: 62px; margin-left: 5px; padding: 7px 0 0 4px; border-left: 2px dotted #ccc; }
.tool { display: flex; flex-direction: column; align-items: center; gap: 1px; white-space: nowrap; }
.tool-sep { width: 1px; height: 54px; background: #777; margin: -3px 0 0 5px; }
.address { display: flex; height: 30px; padding: 3px 0 2px 5px; }
.up { width: 45px; border-left: 2px dotted #ccc; border-right: 2px dotted #ccc; display: grid; place-items: center; padding-right: 12px; }
.up path { fill: none; stroke: #777; stroke-width: 2; }
.combo { flex: 1; display: flex; align-items: center; gap: 5px; margin-left: 5px; padding: 0 3px 0 2px; border: 1px solid #666; }
.path { flex: 1; white-space: nowrap; }
.down path { fill: none; stroke: #444; stroke-width: 1.500; }
.files { position: relative; flex: 1; display: flex; flex-direction: column; border: 1px solid #777; }
.sort { position: absolute; left: 125px; top: 1px; }
.sort path { fill: none; stroke: #777; }
table { width: 100%; table-layout: fixed; border-collapse: collapse; }
th, td { padding: 0; height: 19px; font-weight: 400; text-align: left; white-space: nowrap; }
th { height: 25px; font-size: 12px; }
th.name { width: 256px; padding-left: 7px; border-right: 1px solid #e5e5e5; }
.num { width: 80px; text-align: right; padding-right: 5px; }
th.num { border-right: 1px solid #e5e5e5; font-size: 11px; }
.packed { width: 36px; text-align: right; }
td.name { padding-left: 5px; background: #f5f5f5; }
.selected td { background: #eee; }
.selected .rest { background: #fff; }
.file { display: flex; align-items: center; gap: 2px; width: 250px; overflow: hidden; }
.name-fill { flex: 1; width: 256px; background: #f5f5f5; }
.status { display: flex; align-items: center; height: 24px; padding: 2px 0 0 4px; background: #f0f0f0; }
.status-icons { margin-bottom: 3px; }
.status-text { flex: 1; padding-left: 5px; border-left: 1px solid #ddd; line-height: 20px; }
.grip { align-self: flex-end; margin: 0 1px 2px 0; }
.grip path { fill: #bbb; }

.watermark { position: absolute; right: 48px; bottom: 46px; display: flex; align-items: center; gap: 7px; color: rgba(150, 180, 235, .8); font: 34px/64px "Liberation Sans Narrow", "DejaVu Sans Condensed", sans-serif; }
.watermark path { fill: none; stroke: currentColor; stroke-width: 3; }

.taskbar { display: flex; align-items: stretch; height: 40px; background: linear-gradient(90deg, #001822, #00131f 50%, #000a18); color: #fff; position: relative; }
.start { width: 48px; display: grid; place-items: center; }
.search { width: 288px; display: flex; align-items: center; gap: 9px; padding: 1px 0 0 12px; background: #f1f1f1; border: 1px solid #ccc; border-top: 0; }
.search svg { fill: none; stroke: #222; stroke-width: 1.300; }
.search input { flex: 1; min-width: 0; border: 0; padding: 0; outline: 0; background: none; font: 14px/20px "Noto Sans", sans-serif; }
.search input::placeholder { color: #333; opacity: 1; }
.task { width: 49px; display: grid; place-items: center; border: solid transparent; border-width: 0 4px; }
.open { background: linear-gradient(#76b9ed, #76b9ed) bottom / 100% 2px no-repeat; }
.tray { margin-left: auto; display: flex; align-items: center; gap: 10px; }
.tray path, .notify path { fill: none; stroke: #fff; }
.clock { width: 70px; display: flex; flex-direction: column; justify-content: center; text-align: center; line-height: 18px; }
.notify { width: 36px; display: grid; place-items: center; }
.peek { width: 15px; background: linear-gradient(#56616b, #56616b) 10px 0 / 1px 100% no-repeat; }

.dialog { position: absolute; left: 440px; top: 180px; width: 392px; display: flex; flex-direction: column; padding-bottom: 24px; background: #fff; border: 1px solid #bbb; font-size: 14px; line-height: 20px; }
h1 { margin: 16px 23px 16px; font-size: 16px; line-height: 24px; font-weight: 400; }
.picker { display: flex; height: 346px; overflow: hidden; }
ul { flex: 1; margin: 0; padding: 0; list-style: none; }
.app { width: 100%; height: 50px; display: flex; gap: 11px; padding: 5px 0 0 24px; text-align: left; }
.tile { width: 40px; height: 40px; display: grid; place-items: center; background: #0877d4; }
.chosen { background: #0b80dc; color: #fff; }
.app-name { line-height: 22px; }
.scroll { width: 17px; display: flex; flex-direction: column; align-items: center; background: #f0f0f0; padding-top: 17px; }
.scroll path { fill: none; stroke: #555; stroke-width: 2; }
.thumb { width: 100%; height: 176px; margin-top: 8px; background: #ccc; }
.scroll-down { margin: auto 0 17px; }
.always { display: flex; align-items: center; gap: 8px; margin: 12px 24px 0; }
.always input { appearance: none; width: 21px; height: 21px; margin: 0; border: 2px solid #aaa; background: #fff; }
.ok { align-self: flex-end; width: 200px; height: 32px; margin: 29px 24px 0 0; background: #d7d7d7; font-weight: 600; }
</style>
